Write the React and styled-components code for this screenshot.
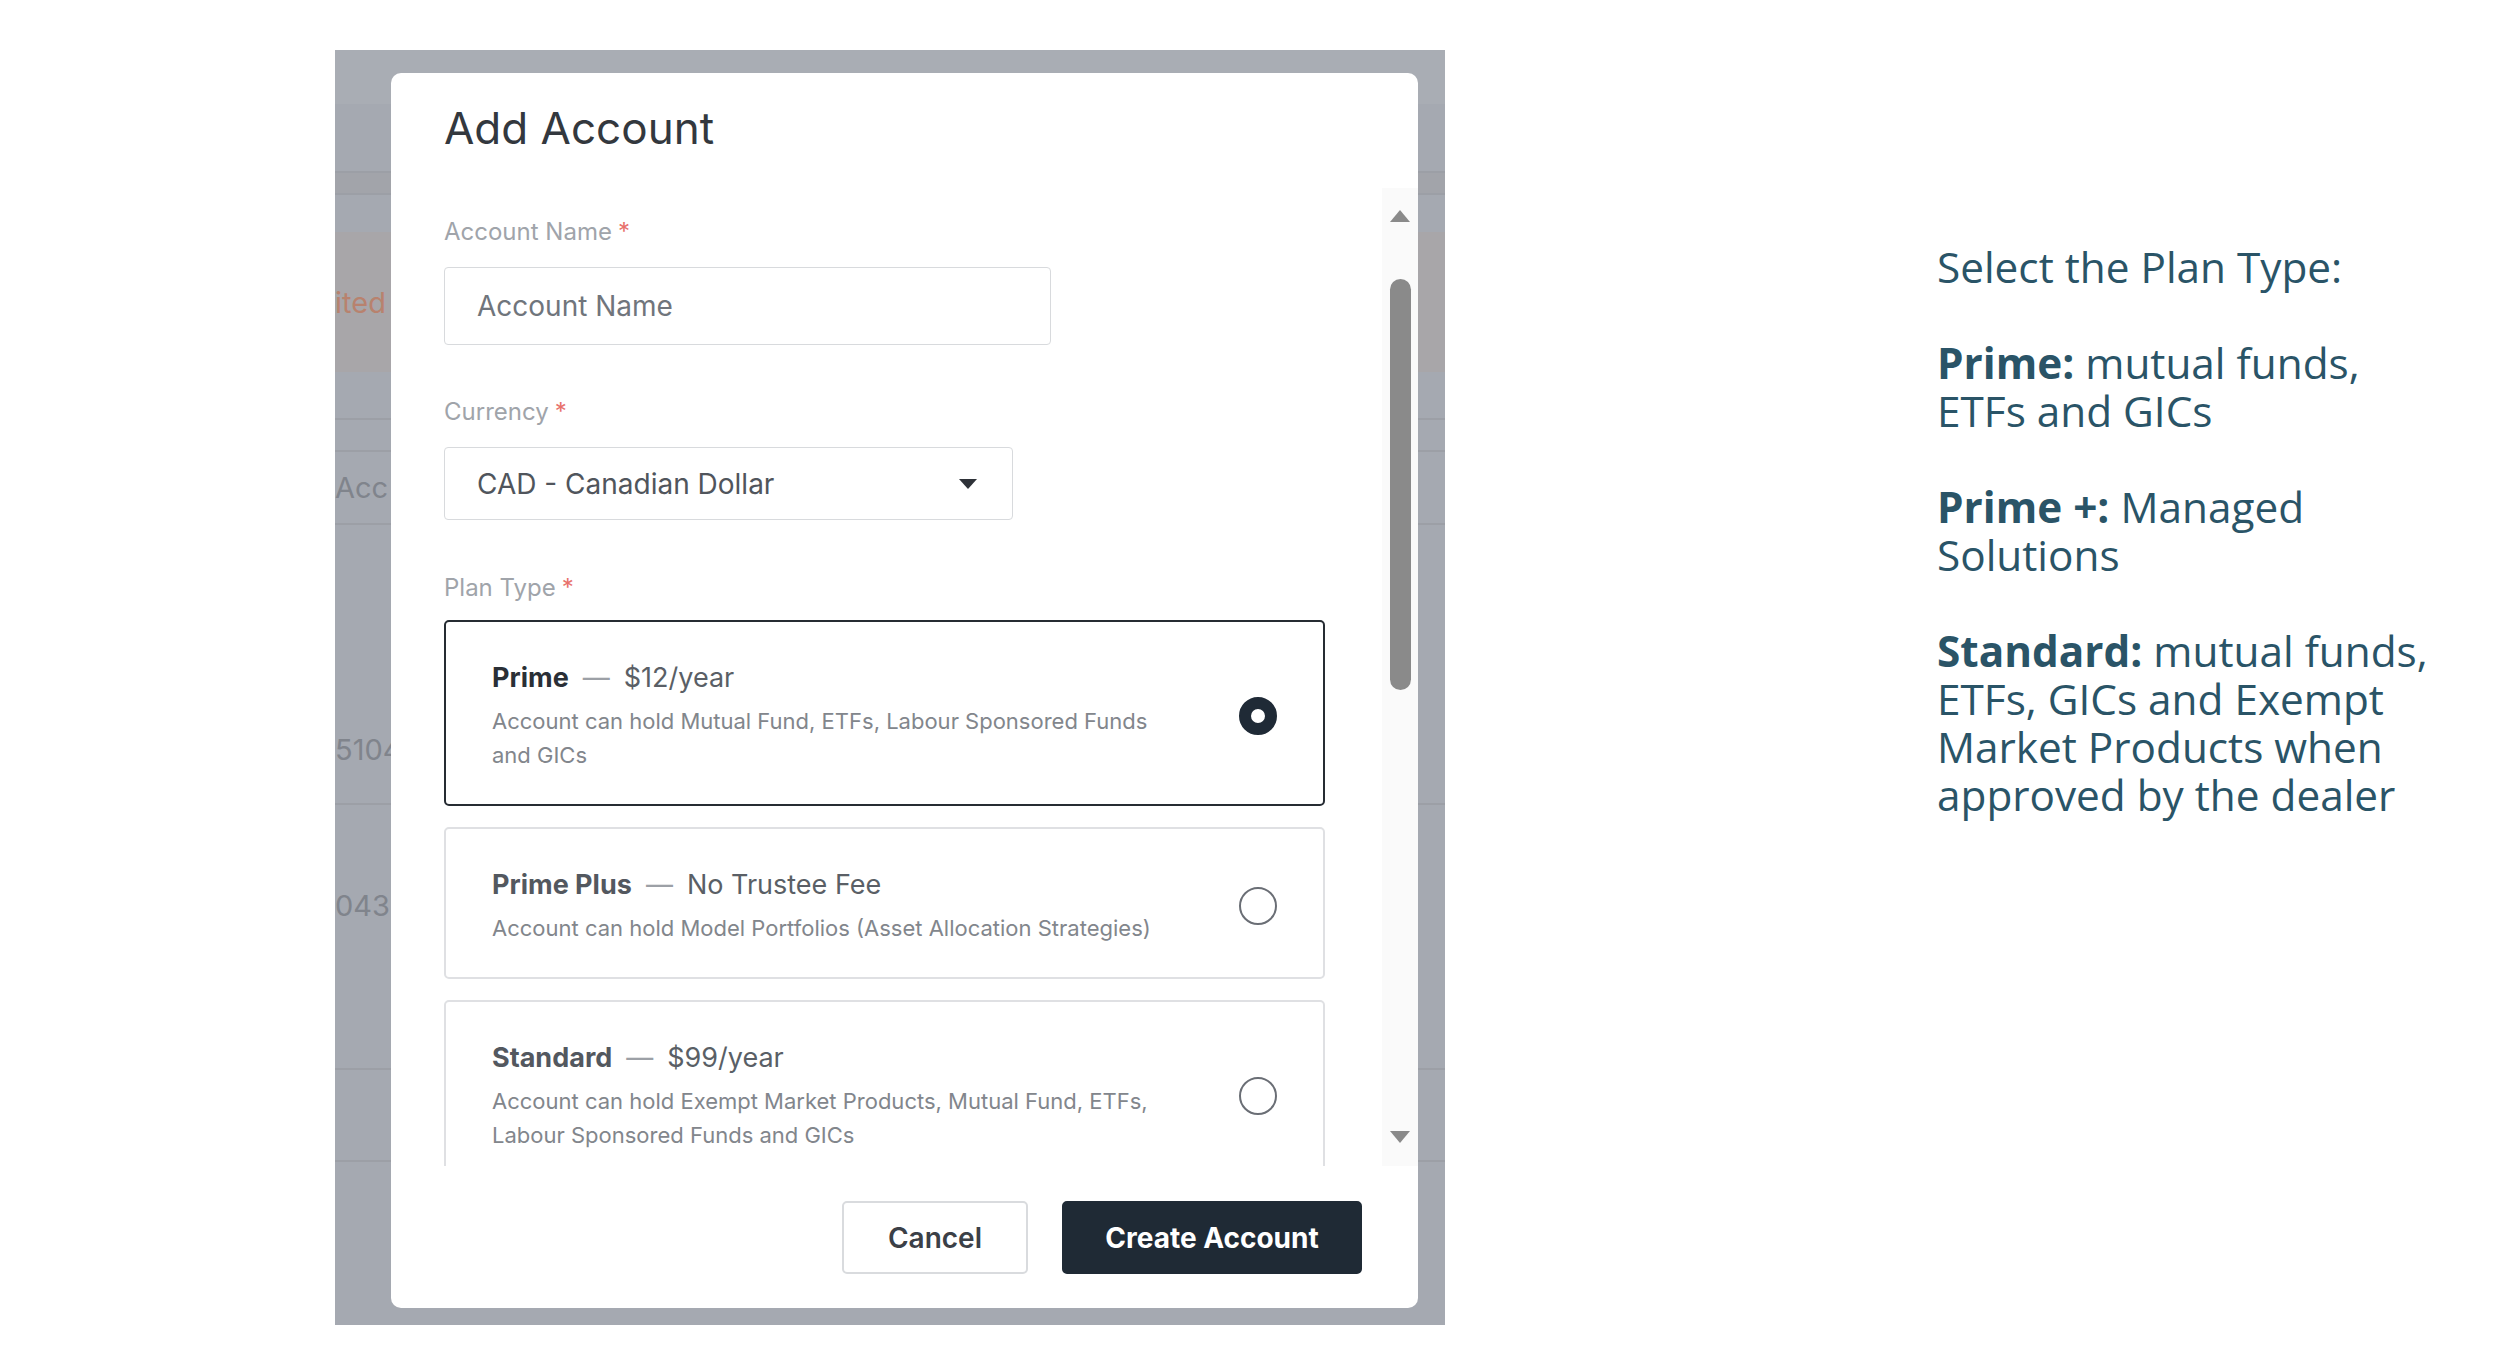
import React from 'react'
import styled, { createGlobalStyle } from 'styled-components'

const GlobalStyle = createGlobalStyle`
  html, body {
    margin: 0;
    padding: 0;
    background: #ffffff;
  }
  body {
    width: 2500px;
    height: 1351px;
    overflow: hidden;
    font-family: Inter, "Noto Sans", sans-serif;
  }
  * {
    box-sizing: border-box;
  }
`

const Page = styled.div`
  display: flex;
  align-items: flex-start;
  padding: 50px 0 0 335px;
`

/* ---------- greyed out page behind the dialog ---------- */

const Backdrop = styled.div`
  position: relative;
  flex: none;
  width: 1110px;
  height: 1275px;
  background: #a5a9b1;
  overflow: hidden;
`

const BgRow = styled.div`
  height: ${p => p.h}px;
  display: flex;
  align-items: center;
  background: ${p => (p.tone === 'light' ? '#a9adb4' : p.tone === 'warm' ? '#a8a6a9' : p.tone === 'dark' ? '#a2a4aa' : 'transparent')};
  border-bottom: ${p => (p.line ? '2px solid #9c9fa6' : 'none')};
  font-size: 29px;
  color: ${p => (p.tone === 'warm' ? '#b8826e' : '#80848c')};
  white-space: nowrap;
`

const Pager = styled.div`
  display: flex;
  gap: 40px;
  align-items: flex-end;
  justify-content: center;
  width: 145px;
  height: 45px;
  margin-left: 495px;
  border: 2px solid #989ba2;
  border-radius: 24px;
`

const PagerBar = styled.span`
  width: ${p => p.w}px;
  height: 6px;
  background: #8e9199;
`

/* ---------- dialog ---------- */

const Modal = styled.div`
  position: absolute;
  left: 56px;
  top: 23px;
  width: 1027px;
  height: 1235px;
  background: #ffffff;
  border-radius: 10px;
  display: flex;
  flex-direction: column;
  overflow: hidden;
`

const Title = styled.h2`
  margin: 0;
  padding: 28px 0 0 53px;
  font-size: 44px;
  line-height: 54px;
  font-weight: 400;
  color: #33383e;
`

const ScrollArea = styled.div`
  display: flex;
  height: 978px;
  margin-top: 33px;
`

const Content = styled.div`
  flex: 1;
  overflow: hidden;
  padding: 29px 58px 0 53px;
`

const Track = styled.div`
  width: 36px;
  background: #fafafa;
  display: flex;
  flex-direction: column;
  align-items: center;
  padding: 22px 0 23px;
`

const Arrow = styled.span`
  width: 0;
  height: 0;
  border-left: 10px solid transparent;
  border-right: 10px solid transparent;
  ${p => (p.down ? 'border-top: 12px solid #8a8a8a;' : 'border-bottom: 12px solid #8a8a8a;')}
  ${p => (p.down ? 'margin-top: auto;' : '')}
`

const Thumb = styled.div`
  width: 21px;
  height: 411px;
  margin-top: 57px;
  border-radius: 11px;
  background: #8a8a8a;
`

const Field = styled.div`
  margin-bottom: ${p => p.gap}px;
`

const Label = styled.div`
  font-size: 24px;
  line-height: 30px;
  color: #a0a4aa;
  margin-bottom: ${p => p.gap || 20}px;
`

const Star = styled.span`
  color: #e8716c;
  margin-left: 6px;
`

const TextInput = styled.input`
  display: block;
  width: 607px;
  height: 78px;
  border: 1.5px solid #d8dadd;
  border-radius: 4px;
  padding: 0 32px;
  font-family: Inter, "Noto Sans", sans-serif;
  font-size: 28px;
  color: #3f444b;
  outline: none;
  &::placeholder {
    color: #70757c;
  }
`

const Select = styled.div`
  display: flex;
  align-items: center;
  justify-content: space-between;
  width: 569px;
  height: 73px;
  border: 1.5px solid #d8dadd;
  border-radius: 4px;
  padding: 0 35px 0 32px;
  font-size: 28px;
  color: #50555c;
`

const Caret = styled.span`
  width: 0;
  height: 0;
  border-left: 9px solid transparent;
  border-right: 9px solid transparent;
  border-top: 10px solid #2e3238;
`

const Cards = styled.div`
  display: flex;
  flex-direction: column;
  gap: 21px;
`

const Card = styled.div`
  display: flex;
  align-items: center;
  justify-content: space-between;
  width: 881px;
  padding: 38px 46px 32px;
  border: ${p => (p.selected ? '2px solid #262c33' : '2px solid #dfe0e3')};
  border-radius: 5px;
  flex: none;
`

const PlanName = styled.div`
  font-size: 27px;
  line-height: 36px;
  color: #5a5f66;
  white-space: nowrap;
`

const PlanStrong = styled.strong`
  font-weight: 700;
  color: ${p => (p.selected ? '#2a2f36' : '#53585f')};
`

const Dash = styled.span`
  color: #9ca0a6;
  margin: 0 14px;
`

const PlanDesc = styled.div`
  margin-top: 8px;
  font-size: 22px;
  line-height: 34px;
  color: #82868c;
  white-space: nowrap;
`

const Radio = styled.span`
  flex: none;
  width: 38px;
  height: 38px;
  border-radius: 50%;
  border: ${p => (p.checked ? '12px solid #1f2a36' : '2px solid #6a6e75')};
  background: #ffffff;
`

const Footer = styled.div`
  display: flex;
  justify-content: flex-end;
  gap: 34px;
  padding: 35px 56px 0 0;
`

const Button = styled.button`
  height: 73px;
  width: ${p => p.w}px;
  border-radius: 5px;
  font-family: Inter, "Noto Sans", sans-serif;
  font-size: 28px;
  font-weight: ${p => (p.primary ? 700 : 600)};
  color: ${p => (p.primary ? '#ffffff' : '#3b4047')};
  background: ${p => (p.primary ? '#1f2a35' : '#ffffff')};
  border: ${p => (p.primary ? '2px solid #1f2a35' : '2px solid #d9dbde')};
  cursor: pointer;
`

/* ---------- explanation on the right ---------- */

const Notes = styled.div`
  margin: 193px 0 0 492px;
  font-family: "Open Sans", "Noto Sans", sans-serif;
  font-size: 42.3px;
  line-height: 48px;
  color: #2a5467;
  white-space: nowrap;
`

const Note = styled.p`
  margin: 0 0 48px;
`

const plans = [
  {
    name: 'Prime',
    price: '$12/year',
    desc: ['Account can hold Mutual Fund, ETFs, Labour Sponsored Funds', 'and GICs'],
    selected: true,
  },
  {
    name: 'Prime Plus',
    price: 'No Trustee Fee',
    desc: ['Account can hold Model Portfolios (Asset Allocation Strategies)'],
  },
  {
    name: 'Standard',
    price: '$99/year',
    desc: ['Account can hold Exempt Market Products, Mutual Fund, ETFs,', 'Labour Sponsored Funds and GICs'],
  },
]

function PlanCard({ plan }) {
  return (
    <Card selected={plan.selected}>
      <div>
        <PlanName>
          <PlanStrong selected={plan.selected}>{plan.name}</PlanStrong>
          <Dash>—</Dash>
          {plan.price}
        </PlanName>
        <PlanDesc>
          {plan.desc.map((line, i) => (
            <div key={i}>{line}</div>
          ))}
        </PlanDesc>
      </div>
      <Radio checked={plan.selected} />
    </Card>
  )
}

function App() {
  return (
    <>
      <GlobalStyle />
      <Page>
        <Backdrop>
          <BgRow h={54} tone="light" />
          <BgRow h={69} line />
          <BgRow h={22} tone="dark" line />
          <BgRow h={37} />
          <BgRow h={140} tone="warm">ited</BgRow>
          <BgRow h={48} line />
          <BgRow h={32} line />
          <BgRow h={73} line>Acc</BgRow>
          <BgRow h={170} />
          <BgRow h={110} line>5104</BgRow>
          <BgRow h={200}>0432(</BgRow>
          <BgRow h={65} line />
          <BgRow h={92} line />
          <BgRow h={73} />
          <Pager>
            <PagerBar w={45} />
            <PagerBar w={30} />
          </Pager>

          <Modal>
            <Title>Add Account</Title>
            <ScrollArea>
              <Content>
                <Field gap={52}>
                  <Label>
                    Account Name<Star>*</Star>
                  </Label>
                  <TextInput placeholder="Account Name" />
                </Field>
                <Field gap={53}>
                  <Label>
                    Currency<Star>*</Star>
                  </Label>
                  <Select>
                    CAD - Canadian Dollar
                    <Caret />
                  </Select>
                </Field>
                <Label gap={17}>
                  Plan Type<Star>*</Star>
                </Label>
                <Cards>
                  {plans.map(p => (
                    <PlanCard key={p.name} plan={p} />
                  ))}
                </Cards>
              </Content>
              <Track>
                <Arrow />
                <Thumb />
                <Arrow down />
              </Track>
            </ScrollArea>
            <Footer>
              <Button w={186}>Cancel</Button>
              <Button w={300} primary>
                Create Account
              </Button>
            </Footer>
          </Modal>
        </Backdrop>

        <Notes>
          <Note>Select the Plan Type:</Note>
          <Note>
            <strong>Prime:</strong> mutual funds,
            <br />
            ETFs and GICs
          </Note>
          <Note>
            <strong>Prime +:</strong> Managed
            <br />
            Solutions
          </Note>
          <Note>
            <strong>Standard:</strong> mutual funds,
            <br />
            ETFs, GICs and Exempt
            <br />
            Market Products when
            <br />
            approved by the dealer
          </Note>
        </Notes>
      </Page>
    </>
  )
}

export default App
